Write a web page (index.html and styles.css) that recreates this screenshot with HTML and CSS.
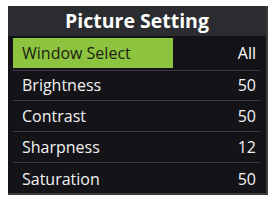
FILE: index.html
```html
<!DOCTYPE html>
<html lang="en">
<head>
	<meta charset="UTF-8">
	<title>Picture Setting</title>
	<link rel="stylesheet" href="styles.css">
</head>
<body>
	<div class="osd">
		<div class="osd-title">Picture Setting</div>
		<ul class="osd-list">
			<li class="active"><span>Window Select</span><span class="val">All</span></li>
			<li><span>Brightness</span><span class="val">50</span></li>
			<li><span>Contrast</span><span class="val">50</span></li>
			<li><span>Sharpness</span><span class="val">12</span></li>
			<li><span>Saturation</span><span class="val">50</span></li>
		</ul>
	</div>
</body>
</html>
```

FILE: styles.css
```css
*{margin:0;padding:0;box-sizing:border-box;}
body{
	background:#fff;
	font-family:"Open Sans","Noto Sans",sans-serif;
	padding:6px 0 0 8px;
}
.osd{
	width:260px;
	background:#141317;
	border-right:2px solid #3a3a3d;
	border-bottom:2px solid #3a3a3d;
}
.osd-title{
	height:30px;
	background:#2a2c30;
	color:#fff;
	font-weight:bold;
	font-size:19.5px;
	line-height:30px;
	text-align:center;
}
.osd-list{
	list-style:none;
	padding:2px 6px 0 5px;
	height:157px;
}
.osd-list li{
	display:flex;
	justify-content:space-between;
	align-items:center;
	height:31px;
	padding:0 4px 0 9px;
	color:#f2f2f2;
	font-size:16px;
	border-bottom:1px solid #3b3b3f;
}
.osd-list li:last-child{border-bottom:none;}
.osd-list li.active{
	background:linear-gradient(to right,#8cc43f 0,#8cc43f 160px,transparent 160px);
	color:#1b1d14;
	height:32px;
	border-bottom:2px solid #141317;
	box-shadow:0 1px 0 #3b3b3f;
}
.osd-list li.active .val{color:#fff;}
```
